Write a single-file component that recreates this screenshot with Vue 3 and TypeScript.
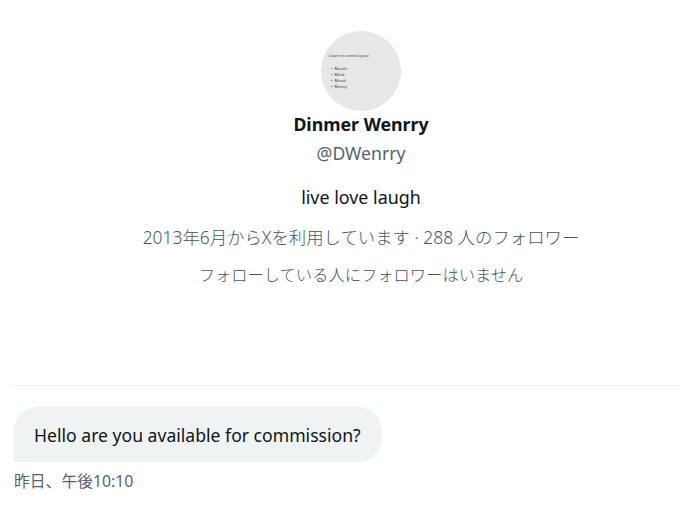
<template>
  <div class="page">
    <section class="profile">
      <div class="avatar">
        <p>Learn to control your:</p>
        <ul>
          <li v-for="item in avatarItems" :key="item">{{ item }}</li>
        </ul>
      </div>
      <div class="name">Dinmer Wenrry</div>
      <div class="handle">@DWenrry</div>
      <div class="bio">live love laugh</div>
      <div class="meta">2013年6月からXを利用しています · 288 人のフォロワー</div>
      <div class="followers">フォローしている人にフォロワーはいません</div>
    </section>
    <div class="divider"></div>
    <div class="bubble">Hello are you available for commission?</div>
    <div class="time">昨日、午後10:10</div>
  </div>
</template>

<script setup lang="ts">
const avatarItems: string[] = ['Mouth', 'Mind', 'Mood', 'Money']
</script>

<style>
html,
body {
  margin: 0;
  background: #fff;
}
</style>

<style scoped>
.page {
  height: 507px;
  overflow: hidden;
  padding-left: 14px;
  box-sizing: border-box;
  font-family: "Noto Sans", "Noto Sans CJK JP", sans-serif;
  color: #0f1419;
}

.profile {
  margin-left: 28px;
  padding-top: 31px;
  height: 385px;
  box-sizing: border-box;
  display: flex;
  flex-direction: column;
  align-items: center;
  text-align: center;
}

.avatar {
  flex: none;
  width: 80px;
  height: 80px;
  border-radius: 50%;
  background: #e9e6e9;
  box-sizing: border-box;
  padding: 22px 0 0 8px;
  text-align: left;
  font-size: 4px;
  line-height: 6px;
  color: #333;
}

.avatar p {
  margin: 0 0 7px;
}

.avatar ul {
  margin: 0;
  padding: 0 0 0 2px;
  list-style: none;
}

.avatar li {
  display: flex;
  gap: 2px;
}

.avatar li::before {
  content: "•";
}

.name {
  font-size: 17.75px;
  font-weight: 700;
  line-height: 28px;
  margin-top: -1px;
}

.handle {
  margin-top: 1px;
  font-size: 17.6px;
  line-height: 28px;
  color: #536471;
}

.bio {
  margin-top: 18px;
  font-size: 17.9px;
  line-height: 24px;
}

.meta {
  margin-top: 16px;
  font-size: 17.4px;
  font-weight: 300;
  line-height: 24px;
  color: #47555f;
}

.followers {
  margin-top: 14px;
  font-size: 16.3px;
  font-weight: 300;
  line-height: 24px;
  color: #47555f;
}

.divider {
  height: 1px;
  background: #eff3f4;
}

.bubble {
  margin-top: 21px;
  width: fit-content;
  padding: 16px 21px 15px 20px;
  background: #eff3f4;
  border-radius: 24px 24px 24px 2px;
  font-size: 17.6px;
  line-height: 24px;
}

.time {
  margin-top: 8px;
  font-size: 15.8px;
  line-height: 22px;
  color: #536471;
}
</style>
